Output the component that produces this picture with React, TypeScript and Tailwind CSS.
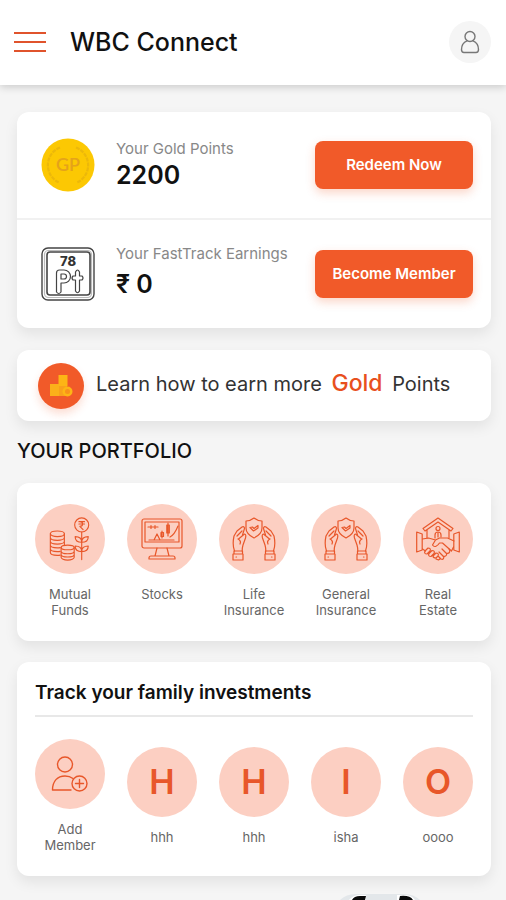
import React from "react";

type IconProps = { className?: string };

const line = {
  fill: "none",
  stroke: "currentColor",
  strokeWidth: 1.2,
  strokeLinecap: "round" as const,
  strokeLinejoin: "round" as const,
};

function ProfileIcon() {
  return (
    <svg viewBox="0 0 20 24" className="h-6 w-5 text-[#777]" {...line} strokeWidth={1.4} aria-hidden="true">
      <circle cx="10" cy="6.5" r="5" />
      <path d="M7 10.8C3.500 12.300 1.500 15 1.500 19.500 1.500 21.700 2.500 22.500 4 22.500h12c1.500 0 2.500-.8 2.500-3 0-4.500-2-7.200-5.500-8.700" />
    </svg>
  );
}

function GoldCoin() {
  return (
    <svg viewBox="0 0 54 54" className="size-[54px] shrink-0" aria-hidden="true">
      <circle cx="27" cy="27" r="26.500" fill="#fcc803" />
      <g fill="none" stroke="#ecb80a" strokeWidth="2.200">
        <path d="M19 9.500a19 19 0 0 0-1 35" strokeDasharray="4 1" />
        <path d="M35 9.500a19 19 0 0 1 1 35" strokeDasharray="4 1" />
      </g>
      <text x="27" y="33" textAnchor="middle" fontSize="18" fontWeight="600" fill="#e5a31a" fontFamily="Lato, sans-serif">
        GP
      </text>
    </svg>
  );
}

function PlatinumIcon() {
  return (
    <svg viewBox="0 0 54 54" className="size-[54px] shrink-0 text-[#444]" {...line} aria-hidden="true">
      <rect x="1" y="1" width="52" height="52" rx="6" strokeWidth="1.400" />
      <rect x="3.500" y="3.500" width="47" height="47" rx="4" stroke="#bbb" />
      <rect x="6" y="5" width="43" height="43" rx="3" strokeWidth="1.600" />
      <text x="27" y="19" textAnchor="middle" fontSize="13" fontWeight="800" fill="#333" stroke="none" fontFamily="Inter, sans-serif">
        78
      </text>
      <path d="M15.500 45V26q0-3 3-3h4.500a6.500 6.500 0 0 1 0 13H20v9q-2.200 3-4.500 0z" />
      <path d="M20 27h3a2.500 2.500 0 0 1 0 5h-3z" />
      <path d="M34.500 44V33H32q-2-2 0-4h2.500v-4q2-4 4 0v4H41q2 2 0 4h-2.500v11q-2 3.500-4 0z" />
    </svg>
  );
}

function PointsIcon() {
  return (
    <span className="flex size-[46px] shrink-0 items-center justify-center rounded-full bg-[#f15a29] shadow-[0_5px_9px_#f15a2933]">
      <svg viewBox="0 0 24 24" className="size-6" aria-hidden="true">
        <path d="M9.500 1h9v11h-9z" fill="#fdb515" />
        <path d="M1 10h9v12H1z" fill="#fbb01a" />
        <path d="M10 12h8v10h-8z" fill="#f9a11b" />
        <circle cx="18.500" cy="17.500" r="5" fill="#fdb515" />
        <circle cx="18.500" cy="17.500" r="2.500" fill="#f9921b" />
      </svg>
    </span>
  );
}

function FundsIcon({ className }: IconProps) {
  return (
    <svg viewBox="-1 1 47 47" className={className} {...line} aria-hidden="true">
      <ellipse cx="9" cy="19" rx="7.500" ry="3" />
      <path d="M1.500 19v20c0 1.700 3.500 3 7.500 3 1 0 2 0 3-.3M16.500 19v12M1.500 23c0 1.700 3.500 3 7.500 3s7.500-1.300 7.500-3M1.500 27c0 1.700 3.500 3 7.500 3s7.500-1.300 7.500-3M1.500 31c0 1.700 3.500 3 7.500 3 1 0 2 0 3-.3M1.500 35c0 1.700 3.500 3 7.500 3 1 0 2 0 3-.3" />
      <ellipse cx="20" cy="33.500" rx="7" ry="2.500" />
      <path d="M13 33.500V44c0 1.500 3 3 7 3s7-1.500 7-3V33.500M13 37.500c0 1.500 3 2.700 7 2.700s7-1.200 7-2.700M13 41c0 1.500 3 2.700 7 2.700s7-1.200 7-2.700" />
      <circle cx="35" cy="9.500" r="7.500" />
      <path d="M32 6h6M32 8.500h6M33 6c4 0 4 5 0 5l3.500 3.500" />
      <path d="M35 17v29.500M35 28c-5 0-7-2-7-6 5 0 7 2 7 6zM35 28c5 0 7-2 7-6-5 0-7 2-7 6zM35 38c-5 0-7-2-7-6 5 0 7 2 7 6zM35 38c5 0 7-2 7-6-5 0-7 2-7 6z" />
    </svg>
  );
}

function StocksIcon({ className }: IconProps) {
  return (
    <svg viewBox="0 2 44 44" className={className} {...line} aria-hidden="true">
      <rect x="2" y="4" width="40" height="29" rx="2" />
      <rect x="5" y="7" width="34" height="20" />
      <path d="M17 33l-2 8h-4q-2 0-2 2v1h26v-1q0-2-2-2h-4l-2-8M15 41h14" />
      <path d="M8 12h10M11 10.500v3M15 10.500v3M9 25h25M14 25l3-6 3 6M30 22c4-2 6-6 8-11" />
      <path d="M22 16v7M21 17.500h2.500v4H21zM28 8v13M26.800 10h2.500v8h-2.500z" />
    </svg>
  );
}

function Hand() {
  return (
    <>
      <path d="M1 39h10v6H1zM2 39v-3h8.500v3M4 42h.5" />
      <path d="M2.500 36C1 32 .5 28 2 21l3-5 5-4c1.800-1 3 .5 2.200 2.500L10.500 20" />
      <path d="M5 21l5-5M6.500 24l6-5c1.500 0 1.500 2 1 4l-2.500 7c-.6 2-.8 4-.8 6M6 24c2 1 3 3 2 5" />
    </>
  );
}

function InsuranceIcon({ className }: IconProps) {
  return (
    <svg viewBox="0 2 44 44" className={className} {...line} aria-hidden="true">
      <path d="M22 3c2.500 2 5 3 8 3v7c0 5-3 7.500-8 10-5-2.500-8-5-8-10V6c3 0 5.500-1 8-3z" />
      <path d="M18 12.500l2.500-.5 1.500 1.500 4-3v2.500L21.500 16z" />
      <Hand />
      <g transform="translate(44 0) scale(-1 1)">
        <Hand />
      </g>
    </svg>
  );
}

function EstateIcon({ className }: IconProps) {
  return (
    <svg viewBox="0 2 44 44" className={className} {...line} aria-hidden="true">
      <path d="M7 13.500L22 3l15 10.500-2 2.500L22 7 9 16zM11 15v8M33 15v8" />
      <circle cx="22" cy="13.500" r="2" />
      <path d="M19 23v-3c0-4 6-4 6 0v2M22 18v4" />
      <path d="M.7 17l5.500 2v16l-5.500 2zM43.300 17l-5.500 2v16l5.500 2z" />
      <path d="M6.500 24l6-1 7 2-3 5c2 3 5 1 7-2h3l9 8 2-4M19.500 25l4-2 8 0 6.500 3M6.500 34l3 2" />
      <path d="M9 36l3-3c2 0 3 1 2 3l-3 3c-2 0-3-1-2-3zM13 38.500l3-3c2 0 3 1 2 3l-3 3c-2 0-3-1-2-3zM17 41l3-3c2 0 3 1 2 3l-2 2c-2 0-3 0-3-2zM22 41l3 3c2 1 4-1 2-3l-4-4M27 41c2 1 5-1 3-3l-4-4M30 38c3 1 5-1 3-4M20 44l2.500 1 2-1.500" />
    </svg>
  );
}

function AddMemberIcon({ className }: IconProps) {
  return (
    <svg viewBox="0 0 38 38" className={className} {...line} strokeWidth={1.4} aria-hidden="true">
      <circle cx="14" cy="9.500" r="7.500" />
      <path d="M20 35H1.500c0-9 5-14 12.500-14 3.500 0 6 1 8 2.500" />
      <circle cx="28.500" cy="28.500" r="7.500" />
      <path d="M28.500 24.500v8M24.500 28.500h8" />
    </svg>
  );
}

function NextBanner() {
  return (
    <svg viewBox="0 0 84 8" className="mx-auto mt-4 block h-2 w-[84px] translate-x-32" aria-hidden="true">
      <path d="M0 8q6-6 16-6h48q10 0 16 6z" fill="#e3e7ea" />
      <path d="M9 8q4-5 11-5h6v5zM57 8V3h7q8 0 11 5z" fill="#fff" />
      <path d="M12 8q2-4 8-4h6l-1 4zM59 8l1-4q10-1 13 4z" fill="#0a0a0a" />
    </svg>
  );
}

const portfolio = [
  { name: "Mutual Funds", Icon: FundsIcon },
  { name: "Stocks", Icon: StocksIcon },
  { name: "Life Insurance", Icon: InsuranceIcon },
  { name: "General Insurance", Icon: InsuranceIcon },
  { name: "Real Estate", Icon: EstateIcon },
];

const family = ["hhh", "hhh", "isha", "oooo"];

const card = "rounded-xl bg-white shadow-[0_6px_14px_#00000014]";
const tile = "flex w-[70px] flex-col items-center gap-3 text-center text-[13px] leading-4 text-[#666]";
const disc = "flex size-[70px] shrink-0 items-center justify-center rounded-full bg-[#fccfc2] text-[#e8572a]";
const action =
  "h-12 w-[158px] shrink-0 rounded-lg bg-[#f15a29] text-[15px] font-semibold text-white shadow-[0_4px_10px_#f15a2940]";

export default function App() {
  return (
    <div className="min-h-screen bg-[#f5f5f5] font-['Inter','Noto_Sans',sans-serif] text-[#111]">
      <header className="flex h-[85px] items-center bg-white pr-[15px] pb-0.5 pl-3.5 shadow-[0_2px_8px_#0000002e]">
        <button type="button" aria-label="Open menu" className="flex w-8 flex-col gap-[7px]">
          <span className="h-0.5 w-full bg-[#e0532c]" />
          <span className="h-0.5 w-full bg-[#e0532c]" />
          <span className="h-0.5 w-full bg-[#e0532c]" />
        </button>
        <h1 className="ml-6 text-[25px] leading-8 font-medium">WBC Connect</h1>
        <button
          type="button"
          aria-label="Profile"
          className="ml-auto flex size-[42px] items-center justify-center rounded-full bg-[#f5f5f5]"
        >
          <ProfileIcon />
        </button>
      </header>

      <main className="pt-[27px] pr-[15px] pl-[17px]">
        <section className={card}>
          <div className="flex h-[108px] items-center border-b-2 border-[#f1f1f1] pr-[18px] pl-6">
            <GoldCoin />
            <div className="ml-[21px]">
              <p className="text-[15px] leading-5 text-[#888]">Your Gold Points</p>
              <p className="text-[25px] leading-8 font-semibold">2200</p>
            </div>
            <button type="button" className={`${action} ml-auto`}>Redeem Now</button>
          </div>
          <div className="flex h-[108px] items-center pr-[18px] pl-6">
            <PlatinumIcon />
            <div className="ml-[21px] pb-1">
              <p className="text-[15px] leading-5 whitespace-nowrap text-[#888]">Your FastTrack Earnings</p>
              <p className="mt-1 text-[25px] leading-8 font-semibold">₹ 0</p>
            </div>
            <button type="button" className={`${action} ml-auto`}>Become Member</button>
          </div>
        </section>

        <a href="#gold" className={`${card} mt-[22px] flex h-[71px] items-center gap-3 pl-[21px]`}>
          <PointsIcon />
          <span className="pb-1 text-xl leading-7 whitespace-nowrap text-[#333]">
            Learn how to earn more{" "}
            <strong className="mx-1 text-[23px] font-medium text-[#e8501e]">Gold</strong> Points
          </span>
        </a>

        <h2 className="mt-4 text-xl leading-7 font-medium">YOUR PORTFOLIO</h2>
        <section className={`${card} mt-[18px] flex h-[158px] justify-between px-[18px] pt-[21px]`}>
          {portfolio.map(({ name, Icon }) => (
            <a key={name} href="#portfolio" className={tile}>
              <span className={disc}>
                <Icon className="size-11" />
              </span>
              <span className="w-16">{name}</span>
            </a>
          ))}
        </section>

        <section className={`${card} mt-[21px] h-[214px] px-[18px] pt-[17px]`}>
          <h2 className="border-b-2 border-[#e8e8e8] pb-2 text-[19px] leading-7 font-semibold">
            Track your family investments
          </h2>
          <div className="mt-[22px] flex items-center justify-between">
            <button type="button" className={tile}>
              <span className={disc}>
                <AddMemberIcon className="size-[38px]" />
              </span>
              <span className="w-16">Add Member</span>
            </button>
            {family.map((name, i) => (
              <a key={i} href="#member" className={tile}>
                <span className={`${disc} text-[34px] font-semibold uppercase`}>{name[0]}</span>
                {name}
              </a>
            ))}
          </div>
        </section>
        <NextBanner />
      </main>
    </div>
  );
}
